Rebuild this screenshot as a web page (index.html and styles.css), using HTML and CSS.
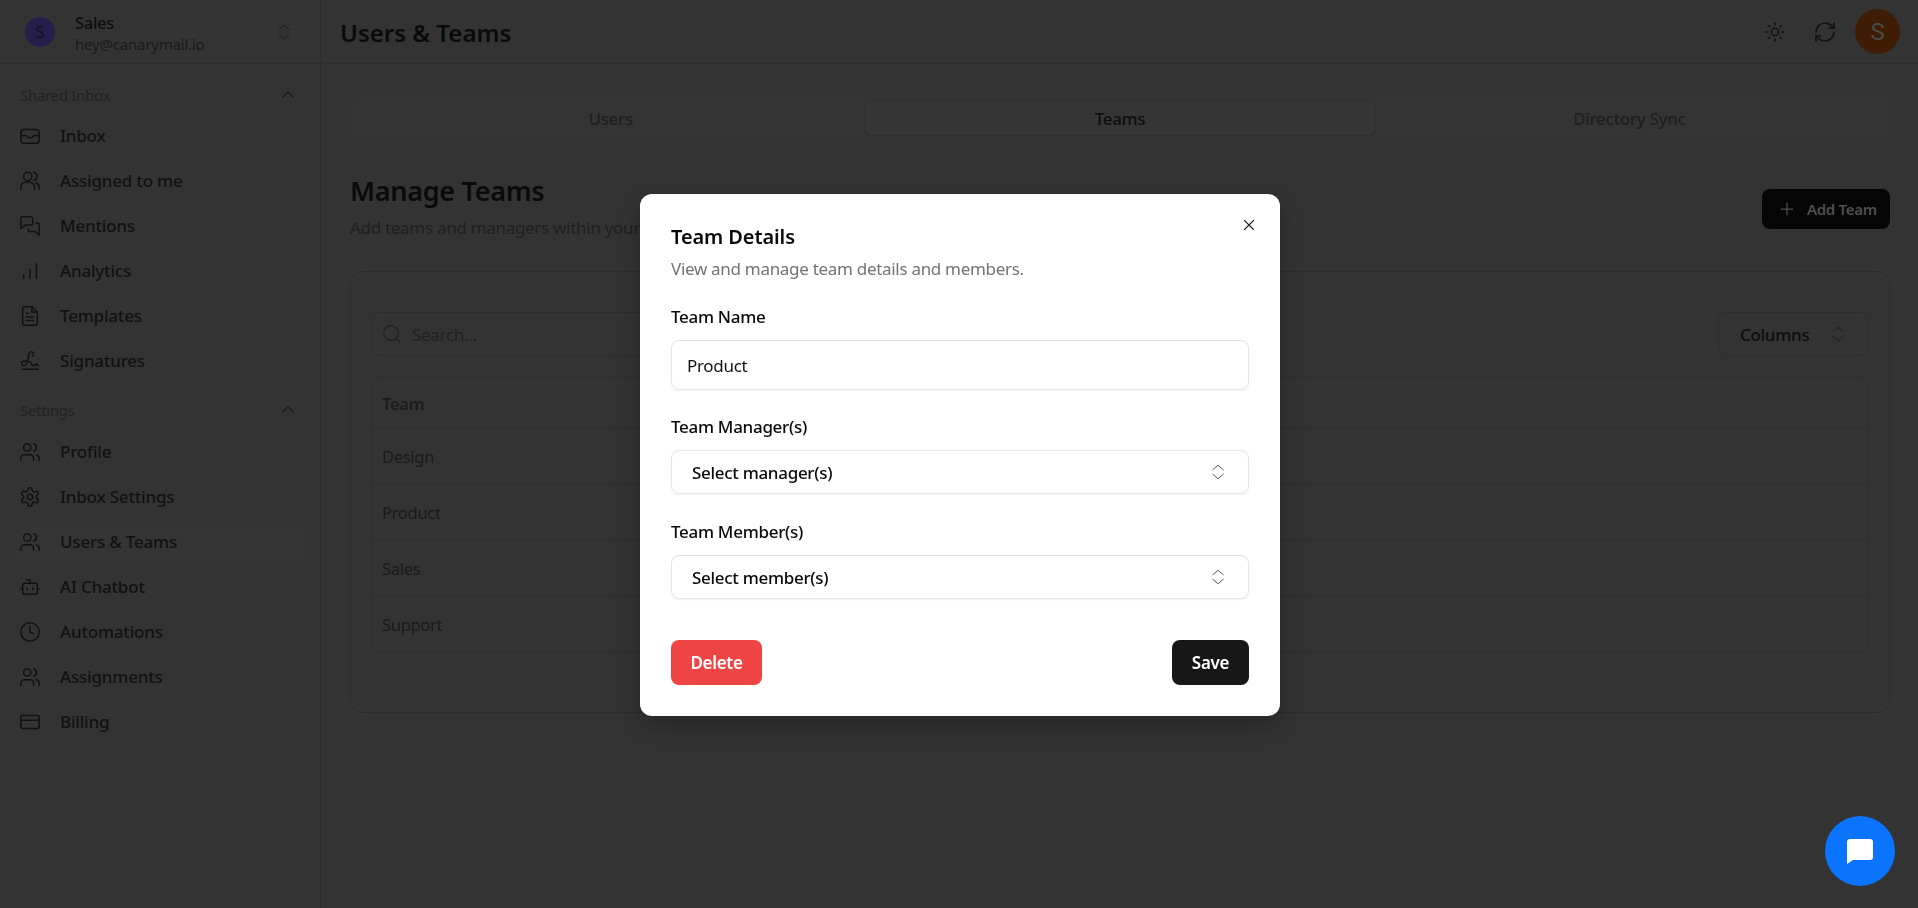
FILE: index.html
```html
<!DOCTYPE html>
<html lang="en">
<head>
<meta charset="utf-8">
<title>Users &amp; Teams</title>
<link rel="stylesheet" href="styles.css">
</head>
<body>
<svg class="defs" width="0" height="0" aria-hidden="true">
  <symbol id="i-updown" viewBox="0 0 24 24"><path d="m5 15 7 6 7-6"/><path d="m5 9 7-6 7 6"/></symbol>
  <symbol id="i-up" viewBox="0 0 24 24"><path d="m5 15 7-7 7 7"/></symbol>
  <symbol id="i-inbox" viewBox="0 0 24 24"><path d="M2 11.500h6l2 2.500h4l2-2.500h6"/><rect x="2" y="5" width="20" height="15" rx="3.500"/></symbol>
  <symbol id="i-assigned" viewBox="0 0 24 24"><path d="M2 21v-2a6 6 0 0 1 6-6h3a6 6 0 0 1 6 6v2"/><circle cx="9.500" cy="7" r="4.500"/><path d="M22 21v-2a5 5 0 0 0-3.500-4.800"/><path d="M16 2.400a4.600 4.600 0 0 1 0 9"/></symbol>
  <symbol id="i-users" viewBox="0 0 24 24"><path d="M16 21v-2a4 4 0 0 0-4-4H6a4 4 0 0 0-4 4v2"/><circle cx="9" cy="7" r="4"/><path d="M22 21v-2a4 4 0 0 0-3-3.870"/><path d="M16 3.130a4 4 0 0 1 0 7.750"/></symbol>
  <symbol id="i-msgs" viewBox="0 0 24 24"><path d="M15 9a2 2 0 0 1-2 2H7l-5 4V3a1 1 0 0 1 1-1h10a2 2 0 0 1 2 2z"/><path d="M18.500 9H21a1 1 0 0 1 1 1v12l-4-4h-6a2 2 0 0 1-2-2v-1"/></symbol>
  <symbol id="i-bars" viewBox="0 0 24 24"><path d="M12 20V10"/><path d="M19 20V4"/><path d="M5 20v-4"/></symbol>
  <symbol id="i-file" viewBox="0 0 24 24"><path d="M14 2H6a2 2 0 0 0-2 2v16a2 2 0 0 0 2 2h12a2 2 0 0 0 2-2V8z"/><path d="M14 2v6h6"/><path d="M16 13H8"/><path d="M16 17H8"/><path d="M10 9H8"/></symbol>
  <symbol id="i-sign" viewBox="0 0 24 24"><path d="m21 17-2.156-1.868A.5.5 0 0 0 18 15.500v.5a1 1 0 0 1-1 1h-2a1 1 0 0 1-1-1c0-2.545-3.991-3.970-8.500-4a1 1 0 0 0 0 5c4.153 0 4.745-11.295 5.708-13.500a2.500 2.500 0 1 1 3.310 3.284"/><path d="M3 21h18"/></symbol>
  <symbol id="i-gear" viewBox="0 0 24 24"><path d="M12.220 2h-.44a2 2 0 0 0-2 2v.18a2 2 0 0 1-1 1.730l-.43.250a2 2 0 0 1-2 0l-.150-.080a2 2 0 0 0-2.730.730l-.220.380a2 2 0 0 0 .730 2.730l.150.100a2 2 0 0 1 1 1.720v.510a2 2 0 0 1-1 1.740l-.150.090a2 2 0 0 0-.730 2.730l.220.380a2 2 0 0 0 2.730.730l.150-.080a2 2 0 0 1 2 0l.430.250a2 2 0 0 1 1 1.730V20a2 2 0 0 0 2 2h.44a2 2 0 0 0 2-2v-.18a2 2 0 0 1 1-1.730l.430-.250a2 2 0 0 1 2 0l.150.080a2 2 0 0 0 2.730-.730l.220-.390a2 2 0 0 0-.730-2.730l-.150-.080a2 2 0 0 1-1-1.740v-.500a2 2 0 0 1 1-1.740l.150-.090a2 2 0 0 0 .730-2.730l-.220-.380a2 2 0 0 0-2.730-.730l-.150.080a2 2 0 0 1-2 0l-.430-.250a2 2 0 0 1-1-1.730V4a2 2 0 0 0-2-2z"/><circle cx="12" cy="12" r="3"/></symbol>
  <symbol id="i-bot" viewBox="0 0 24 24"><path d="M12 8V4H8"/><rect x="4" y="8" width="16" height="12" rx="2"/><path d="M2 14h2"/><path d="M20 14h2"/><path d="M15 13v2"/><path d="M9 13v2"/></symbol>
  <symbol id="i-clock" viewBox="0 0 24 24"><circle cx="12" cy="12" r="10"/><path d="M12 6v6l4 2"/></symbol>
  <symbol id="i-card" viewBox="0 0 24 24"><rect x="2" y="5" width="20" height="14" rx="2"/><path d="M2 10h20"/></symbol>
  <symbol id="i-sun" viewBox="0 0 24 24"><circle cx="12" cy="12" r="4"/><path d="M12 2v2"/><path d="M12 20v2"/><path d="m4.930 4.930 1.410 1.410"/><path d="m17.660 17.660 1.410 1.410"/><path d="M2 12h2"/><path d="M20 12h2"/><path d="m6.340 17.660-1.410 1.410"/><path d="m19.070 4.930-1.410 1.410"/></symbol>
  <symbol id="i-refresh" viewBox="0 0 24 24"><path d="M3 12a9 9 0 0 1 9-9 9.750 9.750 0 0 1 6.740 2.740L21 8"/><path d="M21 3v5h-5"/><path d="M21 12a9 9 0 0 1-9 9 9.750 9.750 0 0 1-6.740-2.740L3 16"/><path d="M8 16H3v5"/></symbol>
  <symbol id="i-search" viewBox="0 0 24 24"><circle cx="11" cy="11" r="8"/><path d="m21 21-4.300-4.300"/></symbol>
  <symbol id="i-plus" viewBox="0 0 24 24"><path d="M5 12h14"/><path d="M12 5v14"/></symbol>
  <symbol id="i-x" viewBox="0 0 24 24"><path d="M18 6 6 18"/><path d="m6 6 12 12"/></symbol>
</svg>

<div class="app">
  <aside class="sidebar">
    <div class="account">
      <span class="account-avatar">S</span>
      <div class="account-text">
        <div class="account-name">Sales</div>
        <div class="account-mail">hey@canarymail.io</div>
      </div>
      <svg class="icon icon-updown"><use href="#i-updown"/></svg>
    </div>
    <nav class="nav">
      <div class="nav-group">
        <span>Shared Inbox</span>
        <svg class="icon icon-up"><use href="#i-up"/></svg>
      </div>
      <a class="nav-item"><svg class="icon"><use href="#i-inbox"/></svg>Inbox</a>
      <a class="nav-item"><svg class="icon"><use href="#i-assigned"/></svg>Assigned to me</a>
      <a class="nav-item"><svg class="icon"><use href="#i-msgs"/></svg>Mentions</a>
      <a class="nav-item"><svg class="icon"><use href="#i-bars"/></svg>Analytics</a>
      <a class="nav-item"><svg class="icon"><use href="#i-file"/></svg>Templates</a>
      <a class="nav-item"><svg class="icon"><use href="#i-sign"/></svg>Signatures</a>
      <div class="nav-group nav-group-next">
        <span>Settings</span>
        <svg class="icon icon-up"><use href="#i-up"/></svg>
      </div>
      <a class="nav-item"><svg class="icon"><use href="#i-users"/></svg>Profile</a>
      <a class="nav-item"><svg class="icon"><use href="#i-gear"/></svg>Inbox Settings</a>
      <a class="nav-item nav-item-active"><svg class="icon"><use href="#i-users"/></svg>Users &amp; Teams</a>
      <a class="nav-item"><svg class="icon"><use href="#i-bot"/></svg>AI Chatbot</a>
      <a class="nav-item"><svg class="icon"><use href="#i-clock"/></svg>Automations</a>
      <a class="nav-item"><svg class="icon"><use href="#i-users"/></svg>Assignments</a>
      <a class="nav-item"><svg class="icon"><use href="#i-card"/></svg>Billing</a>
    </nav>
  </aside>

  <main class="main">
    <header class="topbar">
      <h1 class="page-title">Users &amp; Teams</h1>
      <div class="topbar-actions">
        <svg class="icon icon-sun"><use href="#i-sun"/></svg>
        <svg class="icon icon-refresh"><use href="#i-refresh"/></svg>
        <span class="user-avatar">S</span>
      </div>
    </header>
    <div class="content">
      <div class="tabs">
        <div class="tab">Users</div>
        <div class="tab tab-active">Teams</div>
        <div class="tab">Directory Sync</div>
      </div>
      <div class="section-head">
        <div>
          <h2 class="section-title">Manage Teams</h2>
          <p class="section-sub">Add teams and managers within your</p>
        </div>
        <button class="btn-add"><svg class="icon"><use href="#i-plus"/></svg>Add Team</button>
      </div>
      <section class="card">
        <div class="toolbar">
          <div class="search"><svg class="icon"><use href="#i-search"/></svg>Search...</div>
          <div class="columns">Columns<svg class="icon"><use href="#i-updown"/></svg></div>
        </div>
        <div class="table">
          <div class="row row-head">Team</div>
          <div class="row">Design</div>
          <div class="row">Product</div>
          <div class="row">Sales</div>
          <div class="row">Support</div>
        </div>
      </section>
    </div>
  </main>
</div>

<div class="backdrop">
  <div class="modal">
    <svg class="icon modal-close"><use href="#i-x"/></svg>
    <h3 class="modal-title">Team Details</h3>
    <p class="modal-sub">View and manage team details and members.</p>
    <div class="field-label first">Team Name</div>
    <div class="input">Product</div>
    <div class="field-label">Team Manager(s)</div>
    <div class="select">Select manager(s)<svg class="icon"><use href="#i-updown"/></svg></div>
    <div class="field-label last">Team Member(s)</div>
    <div class="select">Select member(s)<svg class="icon"><use href="#i-updown"/></svg></div>
    <div class="modal-actions">
      <button class="btn btn-delete">Delete</button>
      <button class="btn btn-save">Save</button>
    </div>
  </div>
</div>

<button class="chat-fab" aria-label="Chat">
  <svg viewBox="0 0 26 25" width="26" height="25"><path d="M3 0h20a3 3 0 0 1 3 3v15a3 3 0 0 1-3 3H6L0 25V3a3 3 0 0 1 3-3z" fill="#fff"/></svg>
</button>
</body>
</html>
```

FILE: styles.css
```css
* { box-sizing: border-box; }
html, body { margin: 0; height: 100%; overflow: hidden; }
body {
  background: #333333;
  color: #0f0f0f;
  font-family: "Noto Sans", "Open Sans", "Liberation Sans", sans-serif;
  font-size: 17px;
  letter-spacing: -0.3px;
}
h1, h2, h3, p { margin: 0; }
button { font: inherit; letter-spacing: inherit; border: 0; padding: 0; }
.defs { position: absolute; }
.icon {
  width: 18px; height: 18px; flex: none;
  fill: none; stroke: #111; stroke-width: 1.700;
  stroke-linecap: round; stroke-linejoin: round;
}

.app { display: flex; height: 100vh; }
.sidebar { width: 321px; flex: none; border-right: 1px solid #2d2d2d; }
.account {
  height: 64px; display: flex; align-items: center;
  padding: 0 27px 0 25px; border-bottom: 1px solid #2d2d2d;
}
.account-avatar {
  width: 30px; height: 30px; border-radius: 50%; background: #271d4d;
  display: flex; align-items: center; justify-content: center; font-size: 16px; color: #111;
}
.account-text { margin-left: 20px; flex: 1; padding-top: 2px; }
.account-name { font-size: 16.500px; line-height: 22px; font-weight: 500; color: #0d0d0d; }
.account-mail { font-size: 15px; line-height: 20px; color: #1a1a1a; letter-spacing: -0.2px; }
.icon-updown { stroke: #252525; stroke-width: 1.500; }

.nav { padding: 21px 13px 0; }
.nav-group {
  height: 20px; display: flex; align-items: center; justify-content: space-between;
  padding: 0 10px 0 7px; font-size: 15px; color: #222;
}
.nav-group-next { margin-top: 17px; }
.icon-up { stroke: #1a1a1a; stroke-width: 1.500; }
.nav-group + .nav-item { margin-top: 8px; }
.nav-group-next + .nav-item { margin-top: 9px; }
.nav-item {
  height: 45px; display: flex; align-items: center; gap: 19px;
  padding-left: 6px; font-size: 17px; font-weight: 500; letter-spacing: -0.2px; color: #111; border-radius: 8px;
}
.nav-item .icon { width: 22px; height: 22px; stroke-width: 1.600; }
.nav-item-active { background: #343434; height: 40px; margin: 2.500px 0; }

.main { flex: 1; min-width: 0; display: flex; flex-direction: column; }
.topbar {
  height: 64px; flex: none; display: flex; align-items: center; justify-content: space-between;
  padding: 0 18px 0 19px; border-bottom: 1px solid #2d2d2d;
}
.page-title { font-size: 24px; line-height: 32px; font-weight: 600; color: #0a0a0a; letter-spacing: 0; padding-top: 2px; }
.topbar-actions { display: flex; align-items: center; }
.icon-sun { width: 22px; height: 22px; margin-right: 27px; stroke-width: 1.600; }
.icon-refresh { width: 24px; height: 24px; margin-right: 18px; stroke-width: 1.600; }
.user-avatar {
  width: 45px; height: 45px; border-radius: 50%; background: #3f1d05; color: #4a4a4a;
  display: flex; align-items: center; justify-content: center; font-size: 24px;
  font-family: Roboto, sans-serif;
}

.content { padding: 31px 28px 0 29px; }
.tabs {
  height: 43px; display: grid; grid-template-columns: repeat(3, 1fr); padding: 6px 6px 3px;
  background: #343434; border-radius: 8px;
}
.tab {
  display: flex; align-items: center; justify-content: center;
  font-weight: 500; color: #1f1f1f; border-radius: 6px;
}
.tab-active { background: #353535; box-shadow: 0 0 0 1px #303030; color: #0d0d0d; }

.section-head {
  display: flex; justify-content: space-between; align-items: flex-start;
  margin-top: 35px;
}
.section-title { font-size: 27px; line-height: 36px; font-weight: 600; color: #0a0a0a; }
.section-sub { margin-top: 7px; line-height: 24px; color: #202020; }
.btn-add {
  width: 128px; height: 40px; margin-top: 16px; background: #050505; color: #4f4f4f; border-radius: 8px;
  display: flex; align-items: center; gap: 10px; padding-left: 15px;
  font-size: 15px; font-weight: 600;
}
.btn-add .icon { width: 20px; height: 20px; stroke: #4f4f4f; stroke-width: 1.500; }

.card {
  margin-top: 31px; height: 442px; border: 1px solid #2d2d2d; border-radius: 12px;
  padding: 40px 21px 0;
}
.toolbar { display: flex; justify-content: space-between; }
.search, .columns { height: 44px; border: 1px solid #2d2d2d; border-radius: 8px; display: flex; align-items: center; }
.search { width: 420px; padding-left: 8px; gap: 9px; color: #222; }
.search .icon { width: 22px; height: 22px; stroke: #222; stroke-width: 1.500; }
.columns { width: 150px; padding: 0 20px 0 21px; justify-content: space-between; font-weight: 500; color: #0d0d0d; }
.columns .icon { stroke: #252525; stroke-width: 1.500; }
.table { margin-top: 21px; border: 1px solid #2d2d2d; border-radius: 8px; }
.row {
  height: 56px; display: flex; align-items: center; padding-left: 9px;
  border-top: 1px solid #2d2d2d; color: #1a1a1a; font-size: 16.500px; font-weight: 400;
}
.row-head { height: 50px; border-top: 0; font-weight: 600; color: #1c1c1c; }

.backdrop {
  position: fixed; inset: 0; display: flex; align-items: center; justify-content: center;
  padding: 2px 0 0 2px;
}
.modal {
  position: relative; width: 640px; height: 522px; background: #fff; border-radius: 12px;
  padding: 29px 31px 0; box-shadow: 0 10px 25px rgba(0,0,0,.25); color: #0a0a0a;
}
.modal-close { position: absolute; top: 22px; right: 22px; width: 18px; height: 18px; stroke: #222; stroke-width: 1.500; }
.modal-title { font-size: 20px; line-height: 28px; font-weight: 600; letter-spacing: -0.1px; }
.modal-sub { margin-top: 6px; line-height: 24px; color: #737373; }
.field-label { margin-top: 25px; margin-bottom: 11px; line-height: 24px; font-weight: 500; }
.field-label.first { margin-top: 24px; }
.field-label.last { margin-top: 26px; }
.input {
  height: 50px; border: 1px solid #e5e5e5; border-radius: 8px; display: flex; align-items: center;
  padding-left: 15px; box-shadow: 0 1px 2px rgba(0,0,0,.05); font-weight: 400; color: #111;
}
.select {
  height: 44px; border: 1px solid #e5e5e5; border-radius: 8px; display: flex; align-items: center;
  justify-content: space-between; padding: 0 21px 0 20px;
  box-shadow: 0 1px 2px rgba(0,0,0,.05); font-weight: 500; color: #0a0a0a;
}
.select .icon { stroke: #555; stroke-width: 1.300; }
.modal-actions { display: flex; justify-content: space-between; margin-top: 41px; }
.btn { height: 45px; border-radius: 8px; color: #fff; font-weight: 600; display: flex; align-items: center; justify-content: center; }
.btn-delete { width: 91px; background: #ef4444; }
.btn-save { width: 77px; background: #171717; }

.chat-fab {
  position: fixed; right: 23px; bottom: 22px; width: 70px; height: 70px; border-radius: 50%;
  background: #0a74ff; display: flex; align-items: center; justify-content: center;
}
```
